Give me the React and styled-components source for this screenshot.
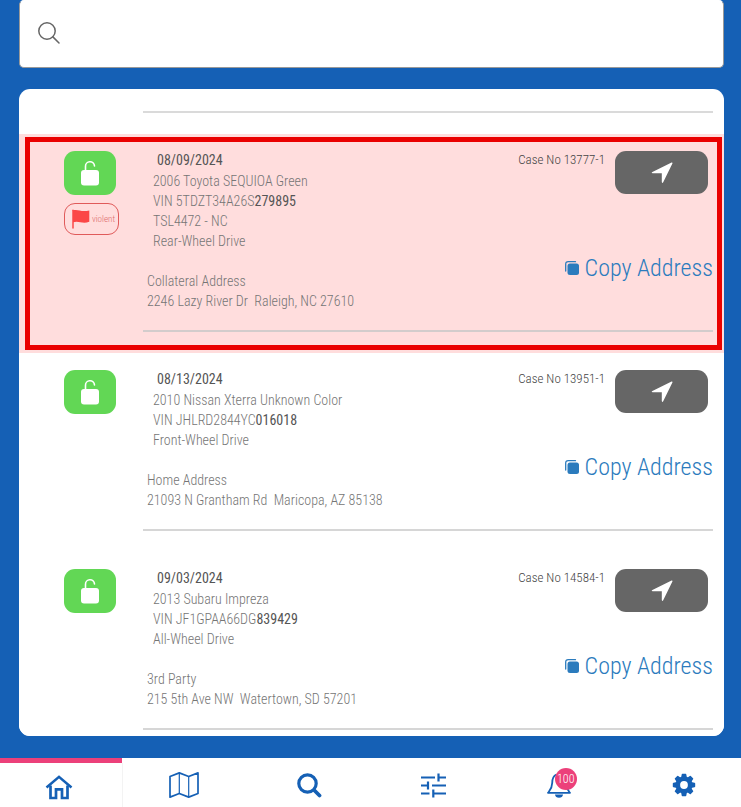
import React from "react";
import styled, { createGlobalStyle, ThemeProvider } from "styled-components";

const theme = {
  blue: "#1560b5",
  link: "#2b7bbd",
  pink: "#ec407a",
  green: "#62d755",
  grey: "#666666",
  alert: "#ffdddd",
  frame: "#ea0000",
  flag: "#fb4747",
};

const GlobalStyle = createGlobalStyle`
  *, *::before, *::after { box-sizing: border-box; }
  body {
    margin: 0;
    background: ${theme.blue};
    color: #757575;
    font: 300 14px/20px "Roboto Condensed", "Roboto", "Liberation Sans", sans-serif;
  }
  button, input { font: inherit; }
  svg { display: block; }
`;

const Page = styled.div`
  height: 100vh;
  display: flex;
  flex-direction: column;
  overflow: hidden;
  background: ${(p) => p.theme.blue};
`;

const SearchBox = styled.label`
  display: flex;
  flex: none;
  align-items: center;
  gap: 14px;
  height: 68px;
  margin: 0 17px 21px 19px;
  padding: 0 18px 2px;
  border: 1px solid #999;
  border-top-color: #fff;
  border-radius: 5px;
  background: #fff;
`;

const SearchInput = styled.input`
  flex: 1;
  min-width: 0;
  height: 44px;
  border: 0;
  outline: 0;
  background: transparent;
  color: #444;
`;

const Panel = styled.main`
  position: relative;
  flex: 1;
  min-height: 0;
  margin: 0 17px 22px 19px;
  border-radius: 11px;
  background: #fff;
  overflow: hidden;
`;

const PreviousRow = styled.div`
  height: 24px;
  margin: 0 11px 21px 124px;
  border-bottom: 2px solid #dadada;
`;

const CaseRow = styled.article`
  position: relative;
  display: flex;
  padding: 15px 11px 21px 0;
  background: ${(p) => (p.$alert ? p.theme.alert : "#fff")};
`;

const HighlightFrame = styled.div`
  position: absolute;
  inset: 3px 2px 3px 6px;
  border: 5px solid ${(p) => p.theme.frame};
  pointer-events: none;
`;

const StatusColumn = styled.div`
  flex: none;
  width: 124px;
  padding: 2px 0 0 45px;
`;

const LockButton = styled.button`
  display: grid;
  place-items: center;
  width: 52px;
  height: 44px;
  padding: 0;
  border: 0;
  border-radius: 11px;
  background: ${(p) => p.theme.green};
  color: #fff;
`;

const FlagTag = styled.span`
  display: flex;
  align-items: center;
  justify-content: flex-end;
  gap: 2px;
  width: 55px;
  height: 32px;
  margin-top: 8px;
  padding-right: 3px;
  border: 1px solid #e05a5a;
  border-radius: 11px;
  color: #dd6a6a;
  font-size: 9px;
`;

const CaseBody = styled.div`
  flex: 1;
  min-width: 0;
  display: flex;
  justify-content: space-between;
  padding-bottom: 19px;
  border-bottom: 2px solid ${(p) => (p.$alert ? "#d3cccc" : "#d6d6d6")};
`;

const Details = styled.div`
  min-width: 0;
`;

const CaseDate = styled.time`
  display: block;
  padding-left: 14px;
  color: #555;
  font-weight: 400;
  line-height: 22px;
`;

const Vehicle = styled.div`
  padding-left: 10px;
  margin-bottom: 20px;
`;

const Address = styled.address`
  padding-left: 4px;
  font-style: normal;
`;

const Line = styled.div`
  white-space: pre;
`;

const Strong = styled.b`
  color: #555;
  font-weight: 400;
`;

const Actions = styled.div`
  flex: none;
  display: flex;
  flex-direction: column;
  align-items: flex-end;
  justify-content: space-between;
`;

const CaseHead = styled.div`
  display: flex;
  gap: 10px;
  padding-right: 5px;
`;

const CaseNumber = styled.span`
  color: #444;
  font-size: 13px;
  line-height: 22px;
`;

const NavigateButton = styled.button`
  display: grid;
  place-items: center;
  width: 93px;
  height: 43px;
  margin-top: 2px;
  padding: 0;
  border: 0;
  border-radius: 11px;
  background: ${(p) => p.theme.grey};
  color: #fff;
`;

const CopyButton = styled.button`
  display: flex;
  align-items: center;
  gap: 6px;
  margin-bottom: 28px;
  padding: 0;
  border: 0;
  background: none;
  color: ${(p) => p.theme.link};
  font-size: 24px;
  line-height: 30px;
  white-space: nowrap;
`;

const TabBar = styled.nav`
  flex: none;
  display: grid;
  grid-template-columns: 122px repeat(5, 1fr);
  height: 49px;
  margin-right: -5px;
  background: #fff;
`;

const Tab = styled.a`
  position: relative;
  display: grid;
  place-items: center;
  padding-top: 5px;
  padding-right: ${(p) => (p.$active ? "4px" : "0")};
  border-top: ${(p) => (p.$active ? `5px solid ${p.theme.pink}` : "0")};
  box-shadow: ${(p) => (p.$active ? "1px 5px 0 #f3f3f3" : "none")};
  color: ${(p) => p.theme.blue};
`;

const BellWrap = styled.span`
  position: relative;
`;

const Badge = styled.span`
  position: absolute;
  top: -4px;
  left: 8px;
  width: 22px;
  height: 22px;
  border-radius: 50%;
  background: ${(p) => p.theme.pink};
  color: #fff;
  font-size: 12px;
  line-height: 22px;
  text-align: center;
`;

const LockIcon = () => (
  <svg width="20" height="28" viewBox="0 0 20 28" aria-hidden="true">
    <path d="M5.500 12V7.500a4.500 4.500 0 0 1 9-.5" fill="none" stroke="currentColor" strokeWidth="1.600" strokeLinecap="round" />
    <rect x="1" y="11" width="18" height="15.500" rx="3" fill="currentColor" />
  </svg>
);

const FlagIcon = () => (
  <svg width="18" height="20" viewBox="0 0 18 20" aria-hidden="true">
    <path d="M1 1.200V19" stroke={theme.flag} strokeWidth="1.500" strokeLinecap="round" />
    <path d="M1 1.400C6-.4 9 3.600 17.300 1.400V12.800C10 15.300 7 11.300 1 13.300Z" fill={theme.flag} />
  </svg>
);

const ArrowIcon = () => (
  <svg width="22" height="22" viewBox="0 0 22 22" aria-hidden="true">
    <path d="M20.600.600Q21.800.200 21.400 1.500L12.200 20.200Q11.200 21.800 10.800 20V11.300H1.700Q-.2 11 1.400 10Z" fill="currentColor" />
  </svg>
);

const CopyIcon = () => (
  <svg width="14" height="14" viewBox="0 0 14 14" aria-hidden="true">
    <path d="M.7 10V3.200Q.7.700 3.200.700H10.500" fill="none" stroke="currentColor" strokeWidth="1.300" strokeLinecap="round" />
    <rect x="2.500" y="2.500" width="11.500" height="11.500" rx="2.500" fill="currentColor" />
  </svg>
);

const SearchThinIcon = () => (
  <svg width="22" height="22" viewBox="0 0 22 22" fill="none" stroke="#666" strokeWidth="1.500" strokeLinecap="round" aria-hidden="true">
    <circle cx="9" cy="9" r="8.200" />
    <path d="M14.900 14.900L21 21" />
  </svg>
);

const HomeIcon = () => (
  <svg width="28" height="25" viewBox="0 0 28 25" fill="none" stroke="currentColor" aria-hidden="true">
    <path d="M1.500 12.500L14 1.800L26.500 12.500" strokeWidth="2.500" />
    <path d="M5.500 10.500V23H11V14.300H17V23H22.500V10.500" strokeWidth="2.700" />
  </svg>
);

const MapIcon = () => (
  <svg width="30" height="26" viewBox="0 0 30 26" fill="none" stroke="currentColor" strokeLinejoin="round" aria-hidden="true">
    <path d="M1 4.500L10.300.9L19.700 4.500L29 .9V21.500L19.700 25.100L10.300 21.500L1 25.100Z" strokeWidth="1.700" />
    <path d="M10.300 1V21.500M19.700 4.500V25" strokeWidth="1.200" />
  </svg>
);

const SearchBoldIcon = () => (
  <svg width="25" height="25" viewBox="0 0 25 25" fill="none" stroke="currentColor" strokeLinecap="round" aria-hidden="true">
    <circle cx="10.500" cy="10.500" r="8.700" strokeWidth="3.200" />
    <path d="M17.500 17.500L22.500 22.500" strokeWidth="3.800" />
  </svg>
);

const TuneIcon = () => (
  <svg width="25" height="25" viewBox="0 0 25 25" fill="none" stroke="currentColor" strokeWidth="2.200" aria-hidden="true">
    <path d="M0 4.500H14M17.500 4.500H25M17.500.5V8.500M0 12.500H7M11 12.500H25M7 8.500V16.500M0 20.500H8.500M12 20.500H25M12.300 16.500V24.500" />
  </svg>
);

const BellIcon = () => (
  <svg width="24" height="26" viewBox="0 0 24 26" aria-hidden="true">
    <path d="M8 22.500H16Q15.500 25.800 12 25.800T8 22.500Z" fill="currentColor" />
    <path d="M9.500 2.500C6 4 5.200 7 5.200 11C5.200 16 3.500 17.500 1 20.800H23C20.500 17.500 18.800 16 18.800 11C18.800 6 17 2.500 12 2" fill="none" stroke="currentColor" strokeWidth="1.800" strokeLinejoin="round" />
  </svg>
);

const GearIcon = () => (
  <svg width="24" height="24" viewBox="0 0 24 24" aria-hidden="true">
    <g fill="currentColor">
      {[0, 45, 90, 135].map((angle) => (
        <path key={angle} d="M9.700 1.500Q9.700.8 10.400.8H13.600Q14.300.8 14.300 1.500L15 5V19L14.300 22.500Q14.300 23.200 13.600 23.200H10.400Q9.700 23.200 9.700 22.500L9 19V5Z" transform={`rotate(${angle} 12 12)`} />
      ))}
      <circle cx="12" cy="12" r="8.500" />
    </g>
    <circle cx="12" cy="12" r="3.900" fill="#fff" />
  </svg>
);

const cases = [
  {
    date: "08/09/2024",
    number: "13777-1",
    model: "2006 Toyota SEQUIOA Green",
    vin: ["5TDZT34A26S", "279895"],
    extra: ["TSL4472 - NC", "Rear-Wheel Drive"],
    addressType: "Collateral Address",
    address: "2246 Lazy River Dr  Raleigh, NC 27610",
    alert: "violent",
  },
  {
    date: "08/13/2024",
    number: "13951-1",
    model: "2010 Nissan Xterra Unknown Color",
    vin: ["JHLRD2844YC", "016018"],
    extra: ["Front-Wheel Drive"],
    addressType: "Home Address",
    address: "21093 N Grantham Rd  Maricopa, AZ 85138",
  },
  {
    date: "09/03/2024",
    number: "14584-1",
    model: "2013 Subaru Impreza",
    vin: ["JF1GPAA66DG", "839429"],
    extra: ["All-Wheel Drive"],
    addressType: "3rd Party",
    address: "215 5th Ave NW  Watertown, SD 57201",
  },
];

const tabs = [
  { label: "Home", icon: <HomeIcon />, active: true },
  { label: "Map", icon: <MapIcon /> },
  { label: "Search", icon: <SearchBoldIcon /> },
  { label: "Filters", icon: <TuneIcon /> },
  { label: "Notifications", icon: <BellWrap><BellIcon /><Badge>100</Badge></BellWrap> },
  { label: "Settings", icon: <GearIcon /> },
];

function Case({ item }) {
  const alert = Boolean(item.alert);
  return (
    <CaseRow $alert={alert}>
      <StatusColumn>
        <LockButton type="button" aria-label="Unlocked"><LockIcon /></LockButton>
        {alert && <FlagTag><FlagIcon />{item.alert}</FlagTag>}
      </StatusColumn>
      <CaseBody $alert={alert}>
        <Details>
          <CaseDate>{item.date}</CaseDate>
          <Vehicle>
            <Line>{item.model}</Line>
            <Line>VIN {item.vin[0]}<Strong>{item.vin[1]}</Strong></Line>
            {item.extra.map((text) => <Line key={text}>{text}</Line>)}
          </Vehicle>
          <Address>
            <Line>{item.addressType}</Line>
            <Line>{item.address}</Line>
          </Address>
        </Details>
        <Actions>
          <CaseHead>
            <CaseNumber>Case No {item.number}</CaseNumber>
            <NavigateButton type="button" aria-label="Navigate"><ArrowIcon /></NavigateButton>
          </CaseHead>
          <CopyButton type="button"><CopyIcon />Copy Address</CopyButton>
        </Actions>
      </CaseBody>
      {alert && <HighlightFrame />}
    </CaseRow>
  );
}

export default function App() {
  return (
    <ThemeProvider theme={theme}>
      <GlobalStyle />
      <Page>
        <SearchBox>
          <SearchThinIcon />
          <SearchInput type="text" aria-label="Search cases" />
        </SearchBox>
        <Panel>
          <PreviousRow />
          {cases.map((item) => <Case key={item.number} item={item} />)}
        </Panel>
        <TabBar>
          {tabs.map((tab) => (
            <Tab key={tab.label} href="#" aria-label={tab.label} $active={tab.active}>{tab.icon}</Tab>
          ))}
        </TabBar>
      </Page>
    </ThemeProvider>
  );
}
